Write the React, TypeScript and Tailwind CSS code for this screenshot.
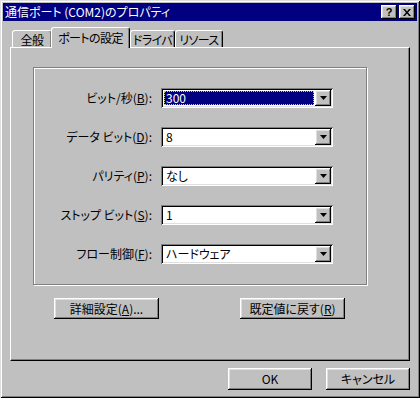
import React from 'react';

const FONT = "font-['Noto_Sans_CJK_JP','Liberation_Sans',sans-serif] [font-feature-settings:'palt']";

const raised =
  'shadow-[inset_-1px_-1px_0_#000000,inset_1px_1px_0_#ffffff,inset_-2px_-2px_0_#808080,inset_2px_2px_0_#dfdfdf]';
const sunken =
  'shadow-[inset_1px_1px_0_#808080,inset_-1px_-1px_0_#ffffff,inset_2px_2px_0_#000000,inset_-2px_-2px_0_#dfdfdf]';

type Field = { label: string; key: string; rest: string; value: string; selected?: boolean };

const FIELDS: Field[] = [
  { label: 'ビット/秒(', key: 'B', rest: '):', value: '300', selected: true },
  { label: 'データ ビット(', key: 'D', rest: '):', value: '8' },
  { label: 'パリティ(', key: 'P', rest: '):', value: 'なし' },
  { label: 'ストップ ビット(', key: 'S', rest: '):', value: '1' },
  { label: 'フロー制御(', key: 'F', rest: '):', value: 'ハードウェア' },
];

const Arrow = () => (
  <svg width="7" height="4" viewBox="0 0 7 4" className="block">
    <path d="M0 0h7L3.5 4z" fill="#000" />
  </svg>
);

const Combo = ({ value, selected }: { value: string; selected?: boolean }) => (
  <div className={`flex w-[172px] h-[20px] bg-white p-[2px] ${sunken}`}>
    <div className="flex-1 flex items-center p-[1px] min-w-0">
      {selected ? (
        <div className="flex-1 h-full flex items-center bg-[#000080] text-white border border-dotted border-[#c8c8a0] pl-[1px] leading-none">
          {value}
        </div>
      ) : (
        <span className="pl-[2px] leading-none">{value}</span>
      )}
    </div>
    <div className={`w-[16px] h-[16px] bg-[#c0c0c0] flex items-center justify-center ${raised}`}>
      <Arrow />
    </div>
  </div>
);

const Button = ({ children, className = '' }: { children: React.ReactNode; className?: string }) => (
  <div className={`h-[21px] bg-[#c0c0c0] flex items-center justify-center leading-none ${raised} ${className}`}>
    {children}
  </div>
);

const Tab = ({ children, active, w }: { children: React.ReactNode; active?: boolean; w: string }) => (
  <div
    className={`${w} bg-[#c0c0c0] flex justify-center border-l border-t border-white border-r border-r-black rounded-t-[3px] shadow-[inset_-1px_0_0_#808080] leading-none whitespace-nowrap tracking-[-0.6px] overflow-hidden ${
      active ? 'h-[21px] -ml-[1px] -mb-[1px] relative z-10 pt-[4px]' : 'h-[17px] pt-[3px]'
    }`}
  >
    {children}
  </div>
);

export default function App() {
  return (
    <div
      className={`w-[420px] h-[398px] bg-[#c0c0c0] p-[3px] text-[12px] text-black ${FONT} shadow-[inset_1px_1px_0_#dfdfdf,inset_-1px_-1px_0_#000000,inset_2px_2px_0_#ffffff,inset_-2px_-2px_0_#808080]`}
    >
      <div className="h-[18px] bg-[#000080] flex items-center justify-between pl-[2px] pr-[2px]">
        <span className="text-white leading-none">通信ポート (COM2)のプロパティ</span>
        <div className="flex gap-[2px]">
          <div className={`w-[16px] h-[14px] bg-[#c0c0c0] flex items-center justify-center ${raised}`}>
            <span className="font-['Liberation_Sans',sans-serif] font-bold text-[11px] leading-none">?</span>
          </div>
          <div className={`w-[16px] h-[14px] bg-[#c0c0c0] flex items-center justify-center ${raised}`}>
            <svg width="8" height="7" viewBox="0 0 8 7">
              <path d="M0 0h2l2 2.5L6 0h2L5 3.5 8 7H6L4 4.5 2 7H0l3-3.5z" fill="#000" />
            </svg>
          </div>
        </div>
      </div>

      <div className="px-[7px] pt-[6px]">
        <div className="flex items-end pl-[2px] h-[20px]">
          <Tab w="w-[40px]">全般</Tab>
          <Tab w="w-[79px]" active>
            ポートの設定
          </Tab>
          <Tab w="w-[45px]">ドライバ</Tab>
          <Tab w="w-[48px]">リソース</Tab>
        </div>

        <div className="h-[314px] border-l border-t border-white border-r border-b border-r-black border-b-black shadow-[inset_-1px_-1px_0_#808080] pt-[19px] pl-[22px]">
          <div className="w-[334px] h-[218px] border border-[#808080] shadow-[inset_1px_1px_0_#ffffff,1px_1px_0_#ffffff] pt-[20px] flex flex-col gap-[19px]">
            {FIELDS.map((f) => (
              <div key={f.key} className="flex items-center h-[20px]">
                <span className="w-[118px] text-right leading-none whitespace-nowrap">
                  {f.label}
                  <span className="underline">{f.key}</span>
                  {f.rest}
                </span>
                <div className="ml-[9px]">
                  <Combo value={f.value} selected={f.selected} />
                </div>
              </div>
            ))}
          </div>

          <div className="flex pl-[21px] mt-[13px] gap-[81px]">
            <Button className="w-[105px]">
              詳細設定(<span className="underline">A</span>)...
            </Button>
            <Button className="w-[105px]">
              既定値に戻す(<span className="underline">R</span>)
            </Button>
          </div>
        </div>

        <div className="flex justify-end gap-[14px] mt-[7px]">
          <Button className="w-[84px] h-[22px]">OK</Button>
          <Button className="w-[84px] h-[22px]">キャンセル</Button>
        </div>
      </div>
    </div>
  );
}
